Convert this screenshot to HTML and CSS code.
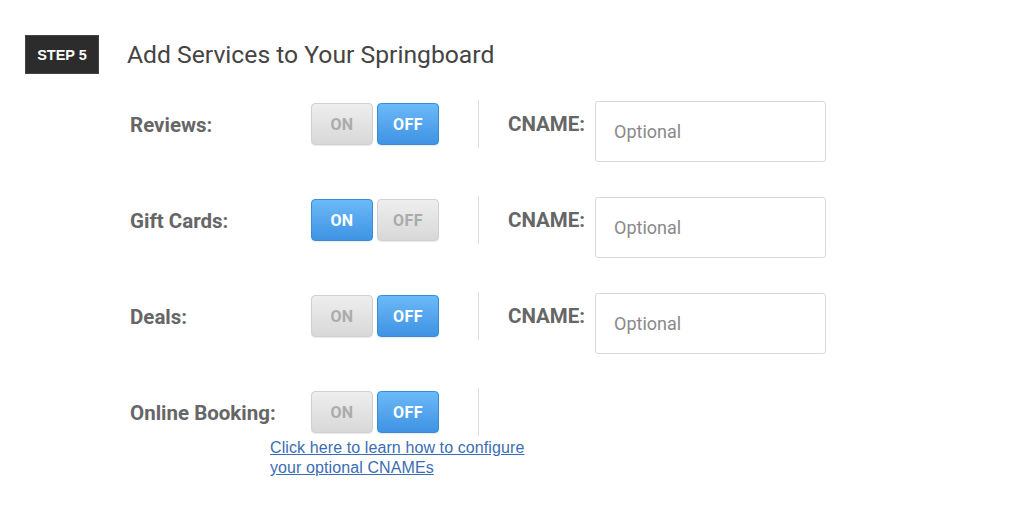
FILE: index.html
```html
<!DOCTYPE html>
<html>
<head>
<meta charset="utf-8">
<link rel="stylesheet" href="styles.css">
</head>
<body>
<div class="page">
  <div class="header">
    <div class="badge">STEP 5</div>
    <h1 class="title">Add Services to Your Springboard</h1>
  </div>
  <div class="rows">
    <div class="row">
      <div class="label">Reviews:</div>
      <div class="toggle"><span class="seg off-state">ON</span><span class="seg on-state">OFF</span></div>
      <div class="divider"></div>
      <div class="cname">CNAME:</div>
      <div class="input">Optional</div>
    </div>
    <div class="row">
      <div class="label">Gift Cards:</div>
      <div class="toggle"><span class="seg on-state">ON</span><span class="seg off-state">OFF</span></div>
      <div class="divider"></div>
      <div class="cname">CNAME:</div>
      <div class="input">Optional</div>
    </div>
    <div class="row">
      <div class="label">Deals:</div>
      <div class="toggle"><span class="seg off-state">ON</span><span class="seg on-state">OFF</span></div>
      <div class="divider"></div>
      <div class="cname">CNAME:</div>
      <div class="input">Optional</div>
    </div>
    <div class="row last">
      <div class="label">Online Booking:</div>
      <div class="toggle"><span class="seg off-state">ON</span><span class="seg on-state">OFF</span></div>
      <div class="divider"></div>
    </div>
    <a class="help" href="#">Click here to learn how to configure<br>your optional CNAMEs</a>
  </div>
</div>
</body>
</html>
```
FILE: styles.css
```css
html, body { margin: 0; padding: 0; background: #fff; }
body { font-family: Roboto, "Liberation Sans", sans-serif; }
.page { padding: 35px 0 0 25px; }
.header { display: flex; align-items: center; }
.badge {
  width: 74px; height: 39px; box-sizing: border-box;
  background: #2c2c2c; color: #fff;
  font-family: "Liberation Sans", Arial, sans-serif; font-weight: bold; font-size: 14.5px;
  display: flex; align-items: center; justify-content: center;
  border: 1px solid #444;
}
.title {
  margin: 0 0 0 28px; font-weight: 400; font-size: 24.7px; color: #444;
  line-height: 30px;
}
.rows { padding: 26px 0 0 105px; }
.row { display: flex; align-items: flex-start; height: 96px; }
.row.last { height: 50px; }
.label {
  width: 181px; font-weight: 700; font-size: 20.5px; color: #666;
  line-height: 24px; margin-top: 13px;
}
.toggle { display: flex; gap: 4px; margin-top: 3px; }
.seg {
  width: 62px; height: 42px; box-sizing: border-box; border-radius: 4px;
  display: flex; align-items: center; justify-content: center;
  font-weight: 700; font-size: 16px; letter-spacing: 0.4px;
}
.on-state {
  background: linear-gradient(#6bb9f8, #3e93e3);
  border: 1px solid #3b8ad6; color: #fff;
  box-shadow: 0 1px 1px rgba(0,0,0,0.08);
}
.off-state {
  background: linear-gradient(#eeeeee, #d8d8d8);
  border: 1px solid #d0d0d0; color: #ababab;
  box-shadow: 0 1px 1px rgba(0,0,0,0.08);
}
.divider { width: 1px; height: 48px; background: #e0e0e0; margin-left: 39px; }
.cname {
  margin-left: 29px; width: 87px; font-weight: 700; font-size: 20.5px; color: #666;
  line-height: 24px; margin-top: 12px;
}
.input {
  width: 231px; height: 61px; box-sizing: border-box; margin-top: 1px;
  border: 1px solid #d8d8d8; border-radius: 3px;
  padding: 0 0 0 18px; display: flex; align-items: center;
  font-size: 18px; color: #8a8a8a;
}
.help {
  display: block; margin-left: 140px; margin-top: 0;
  font-family: "Liberation Sans", Arial, sans-serif; font-size: 16px; line-height: 20px;
  letter-spacing: 0.1px;
  color: #3a6db5; text-decoration: underline;
}
```
